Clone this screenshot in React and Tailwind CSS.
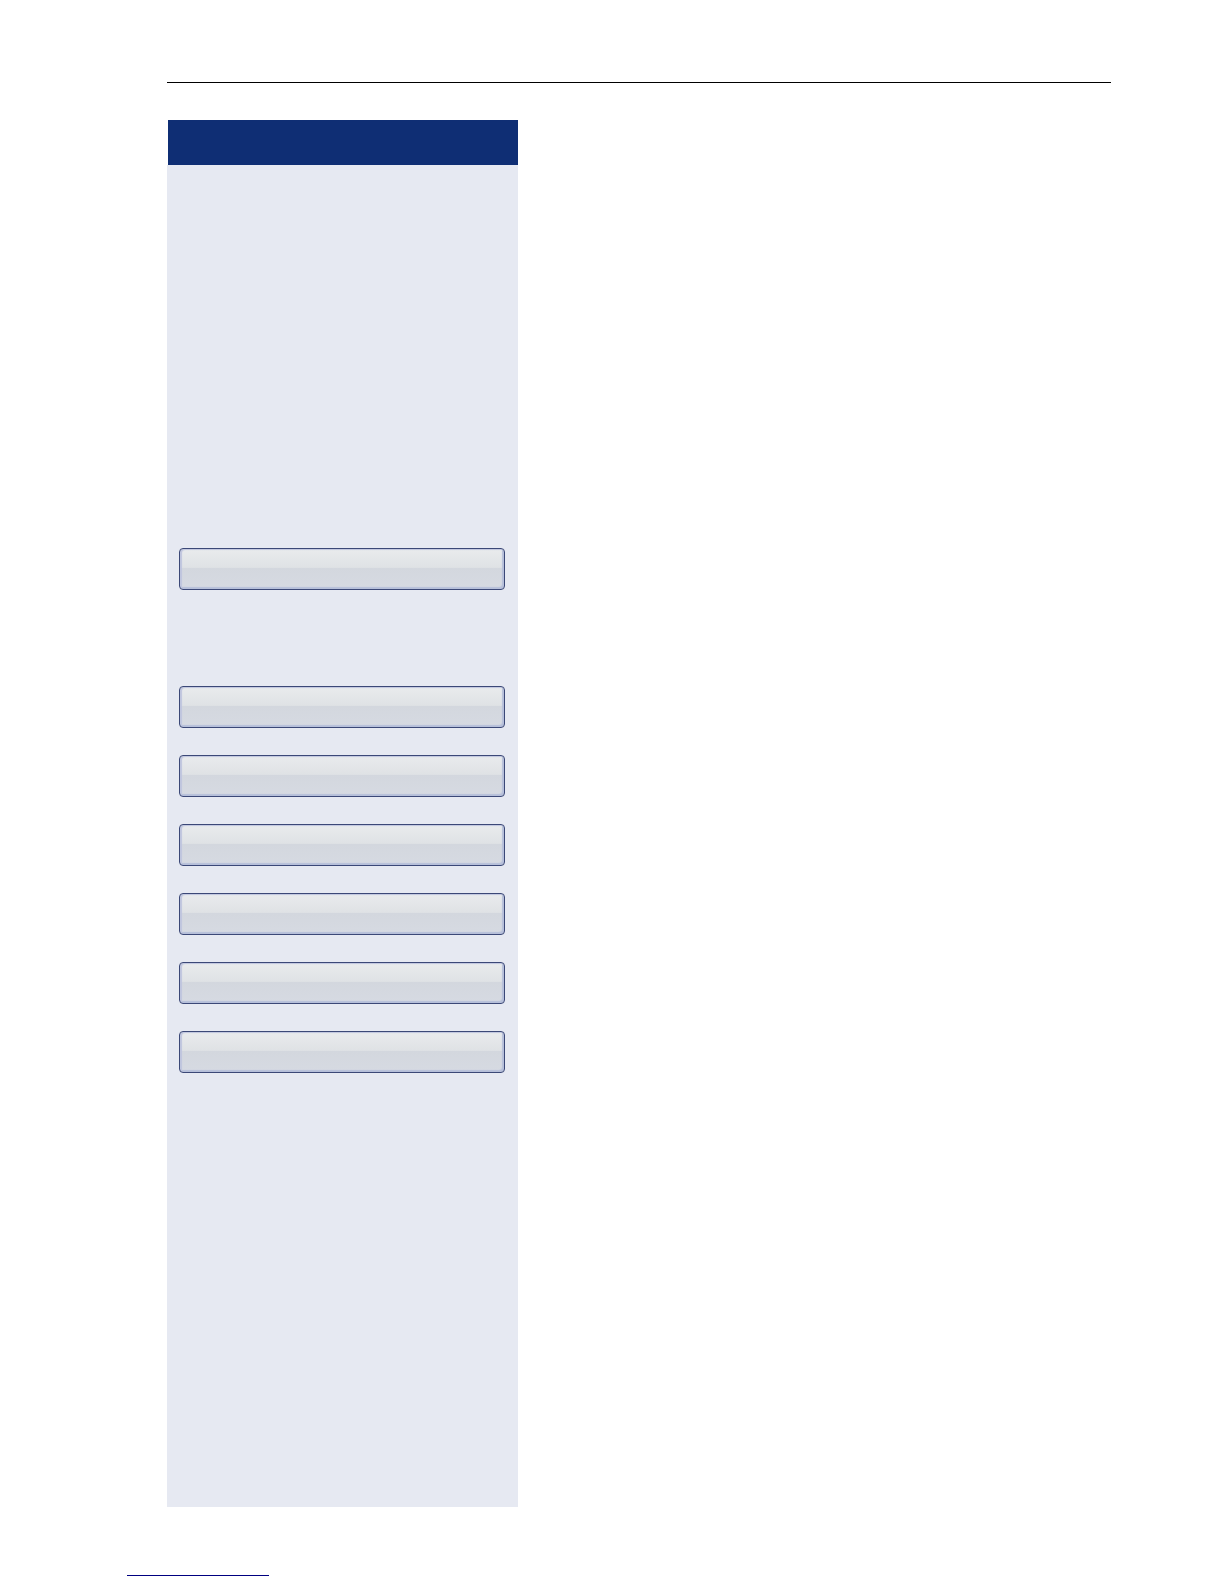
const menuGroups = [
  ["Option 1"],
  ["Option 2", "Option 3", "Option 4", "Option 5", "Option 6", "Option 7"],
];

function MenuKey({ label }) {
  return (
    <button
      type="button"
      aria-label={label}
      className="block h-[42px] w-full rounded-[4px] border border-[#3b4877] bg-[linear-gradient(to_bottom,#e9ebed_0%,#dfe2e5_46%,#d3d7de_48%,#d6dae2_100%)] shadow-[inset_2px_1px_1px_#bfc5de,inset_-2px_-2px_1px_#b6bfda]"
    />
  );
}

export default function App() {
  return (
    <div className="bg-white">
      <main className="pt-[82px] pr-[113px] pl-[167px]">
        <hr className="border-t border-black" />
        <aside className="mt-[37px] w-[351px]">
          <header className="ml-px h-[45px] bg-[#0f2e74]" />
          <nav
            aria-label="Menu"
            className="flex flex-col gap-24 bg-[#e6e9f2] pt-[383px] pr-[13px] pb-[434px] pl-3"
          >
            {menuGroups.map((group) => (
              <div key={group[0]} className="flex flex-col gap-[27px]">
                {group.map((label) => (
                  <MenuKey key={label} label={label} />
                ))}
              </div>
            ))}
          </nav>
        </aside>
      </main>
      <footer className="pt-[68px] pb-2 pl-[127px]">
        <hr className="w-[142px] border-t border-[#000080]" />
      </footer>
    </div>
  );
}
